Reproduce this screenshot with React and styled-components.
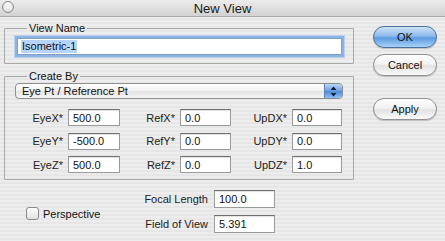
import React from "react";
import styled, { createGlobalStyle } from "styled-components";

const Global = createGlobalStyle`
  html, body {
    margin: 0;
    padding: 0;
  }
  body {
    width: 445px;
    height: 241px;
    overflow: hidden;
    font-family: "Liberation Sans", Arial, sans-serif;
    font-size: 11px;
    color: #111;
  }
`;

const Window = styled.div`
  width: 445px;
  height: 241px;
  display: flex;
  flex-direction: column;
  background: repeating-linear-gradient(#ededed 0 2px, #e6e6e6 2px 4px);
`;

const TitleBar = styled.div`
  height: 16px;
  flex: none;
  display: flex;
  align-items: center;
  justify-content: center;
  position: relative;
  background: linear-gradient(#ececec, #d2d2d2);
  border-bottom: 1px solid #a9a9a9;
  font-size: 13px;
  color: #1a1a1a;
`;

const CloseDot = styled.span`
  position: absolute;
  left: 2px;
  top: 1px;
  width: 10px;
  height: 10px;
  border-radius: 50%;
  border: 1px solid #8c8c8c;
  background: radial-gradient(circle at 50% 35%, #ffffff, #cfcfcf);
`;

const Body = styled.div`
  display: flex;
  flex: 1;
`;

const LeftColumn = styled.div`
  width: 350px;
  margin-left: 4px;
  display: flex;
  flex-direction: column;
`;

const Group = styled.fieldset`
  margin: ${(p) => p.$top}px 0 0 0;
  padding: ${(p) => p.$padTop}px 9px ${(p) => p.$padBottom}px 10px;
  border: 1px solid #a8a8a8;
  border-radius: 1px;
  min-width: 0;
`;

const Legend = styled.legend`
  padding: 0 2px;
  margin-left: 12px;
  line-height: 13px;
  font-size: 11px;
  color: #111;
`;

const TextInput = styled.input`
  box-sizing: border-box;
  display: block;
  width: ${(p) => p.$w || "100%"};
  height: ${(p) => p.$h || 17}px;
  padding: 0 4px;
  border: 1px solid #9a9a9a;
  border-top-color: #6f6f6f;
  background: #fff;
  box-shadow: inset 0 1px 1px rgba(0, 0, 0, 0.12);
  font-family: "Liberation Sans", Arial, sans-serif;
  font-size: 11px;
  color: #111;
  outline: none;
`;

const FocusInput = styled.div`
  box-sizing: border-box;
  height: 17px;
  margin: 2px 2px 0 2px;
  padding: 0 3px;
  display: flex;
  align-items: center;
  background: #fff;
  border: 1px solid #7d9fc8;
  box-shadow: 0 0 0 2px #8fb4e3, 0 0 0 3px #b9d1ef;
`;

const Selected = styled.span`
  background: #b5d5ff;
  padding: 0 1px;
  line-height: 13px;
`;

const Popup = styled.div`
  box-sizing: border-box;
  height: 16px;
  margin-top: 0;
  margin-right: 1px;
  display: flex;
  align-items: center;
  border: 1px solid #8e8e8e;
  border-radius: 4px;
  background: linear-gradient(#ffffff, #f1f1f1 50%, #e3e3e3 51%, #f4f4f4);
  overflow: hidden;
`;

const PopupText = styled.span`
  flex: 1;
  padding-left: 6px;
`;

const Stepper = styled.span`
  width: 17px;
  height: 100%;
  display: flex;
  align-items: center;
  justify-content: center;
  border-left: 1px solid #5a83b9;
  background: linear-gradient(#b9d6f5, #6aa2e3 50%, #4c8ad8 51%, #8dc0f2);
`;

const CoordGrid = styled.div`
  display: grid;
  grid-template-columns: 48px 52px 50px 51px 51px 50px;
  column-gap: 5px;
  row-gap: 6.5px;
  margin-top: 10px;
  align-items: center;
`;

const FieldLabel = styled.label`
  text-align: right;
  white-space: nowrap;
  color: #222;
`;

const Lower = styled.div`
  display: flex;
  align-items: center;
  margin-top: 10px;
`;

const CheckRow = styled.label`
  display: flex;
  align-items: center;
  gap: 4px;
  margin-left: 22px;
  margin-top: 4px;
  width: 118px;
`;

const CheckBox = styled.span`
  box-sizing: border-box;
  width: 13px;
  height: 13px;
  border: 1px solid #8a8a8a;
  border-radius: 3px;
  background: linear-gradient(#fdfdfd, #e2e2e2);
  box-shadow: inset 0 1px 0 #fff;
`;

const CameraGrid = styled.div`
  display: grid;
  grid-template-columns: 64px 61px;
  column-gap: 6px;
  row-gap: 7px;
  align-items: center;
`;

const RightColumn = styled.div`
  margin-left: 19px;
  margin-top: 9px;
  display: flex;
  flex-direction: column;
  width: 64px;
`;

const PillButton = styled.button`
  box-sizing: border-box;
  width: 64px;
  height: 22px;
  margin-top: ${(p) => p.$gap || 0}px;
  border-radius: 11px;
  font-family: "Liberation Sans", Arial, sans-serif;
  font-size: 11px;
  color: #111;
  padding: 0;
  border: 1px solid ${(p) => (p.$primary ? "#4a6f9e" : "#8f8f8f")};
  background: ${(p) =>
    p.$primary
      ? "linear-gradient(#cfe3f8, #8dbbec 45%, #5d9be2 55%, #a7d2f6)"
      : "linear-gradient(#ffffff, #f2f2f2 45%, #e2e2e2 55%, #fafafa)"};
  box-shadow: 0 1px 1px rgba(0, 0, 0, 0.2);
`;

const coords = [
  ["EyeX*", "500.0", "RefX*", "0.0", "UpDX*", "0.0"],
  ["EyeY*", "-500.0", "RefY*", "0.0", "UpDY*", "0.0"],
  ["EyeZ*", "500.0", "RefZ*", "0.0", "UpDZ*", "1.0"],
];

export default function App() {
  return (
    <>
      <Global />
      <Window>
        <TitleBar>
          <CloseDot />
          New View
        </TitleBar>
        <Body>
          <LeftColumn>
            <Group $top={5} $padTop={1} $padBottom={8}>
              <Legend>View Name</Legend>
              <FocusInput>
                <Selected>Isometric-1</Selected>
              </FocusInput>
            </Group>
            <Group $top={6} $padTop={0} $padBottom={6}>
              <Legend>Create By</Legend>
              <Popup>
                <PopupText>Eye Pt / Reference Pt</PopupText>
                <Stepper>
                  <svg width="7" height="11" viewBox="0 0 7 11">
                    <path d="M3.5 0.5 L6.5 4 L0.5 4 Z" fill="#0d1f3a" />
                    <path d="M3.5 10.5 L6.5 7 L0.5 7 Z" fill="#0d1f3a" />
                  </svg>
                </Stepper>
              </Popup>
              <CoordGrid>
                {coords.map((row) =>
                  row.map((cell, i) =>
                    i % 2 === 0 ? (
                      <FieldLabel key={cell}>{cell}</FieldLabel>
                    ) : (
                      <TextInput key={row[i - 1]} defaultValue={cell} />
                    )
                  )
                )}
              </CoordGrid>
            </Group>
            <Lower>
              <CheckRow>
                <CheckBox />
                Perspective
              </CheckRow>
              <CameraGrid>
                <FieldLabel>Focal Length</FieldLabel>
                <TextInput defaultValue="100.0" $h={18} />
                <FieldLabel>Field of View</FieldLabel>
                <TextInput defaultValue="5.391" $h={18} />
              </CameraGrid>
            </Lower>
          </LeftColumn>
          <RightColumn>
            <PillButton $primary>OK</PillButton>
            <PillButton $gap={6}>Cancel</PillButton>
            <PillButton $gap={22}>Apply</PillButton>
          </RightColumn>
        </Body>
      </Window>
    </>
  );
}
